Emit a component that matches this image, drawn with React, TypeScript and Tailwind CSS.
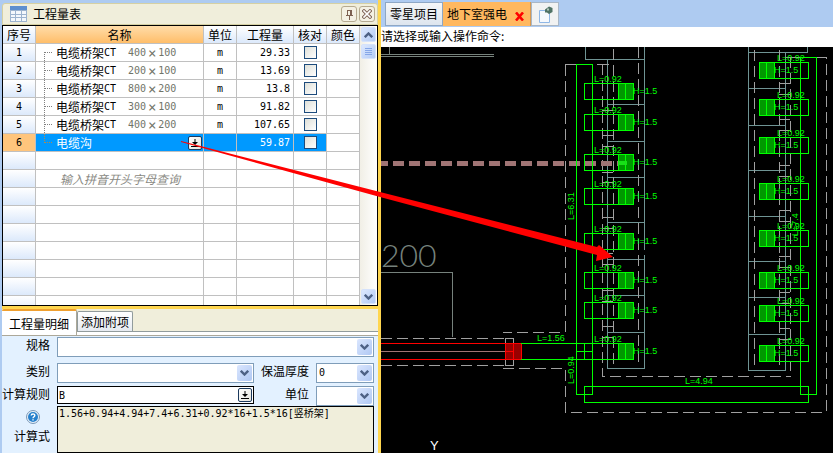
import { useState } from 'react';
import type { ReactNode } from 'react';

type Item = { name: string; size?: [string, string]; unit: string; qty: string };

const items: Item[] = [
  { name: '电缆桥架', size: ['400', '100'], unit: 'm', qty: '29.33' },
  { name: '电缆桥架', size: ['200', '100'], unit: 'm', qty: '13.69' },
  { name: '电缆桥架', size: ['800', '200'], unit: 'm', qty: '13.8' },
  { name: '电缆桥架', size: ['300', '100'], unit: 'm', qty: '91.82' },
  { name: '电缆桥架', size: ['400', '200'], unit: 'm', qty: '107.65' },
  { name: '电缆沟', unit: '', qty: '59.87' },
];

const EMPTY_ROWS = 9;

const cell = 'h-[18px] overflow-hidden border-r border-b border-[#c0c0c0] p-0';
const head = 'h-[18px] border-r border-b border-[#c0c0c0] bg-linear-to-b from-white to-[#dce9fb] p-0 font-normal';
const mono = 'font-[DejaVu_Sans_Mono,monospace] text-[10px]';

function Chevron({ up = false }: { up?: boolean }) {
  return (
    <svg viewBox="0 0 9 6" className="h-[6px] w-[9px]" fill="none" stroke="#4d6185" strokeWidth="2.4">
      <path d={up ? 'M0.8 5.2 4.5 1.5 8.2 5.2' : 'M0.8 0.8 4.5 4.5 8.2 0.8'} />
    </svg>
  );
}

function DropIcon() {
  return (
    <svg viewBox="0 0 8 8" className="h-2 w-2" fill="#000">
      <path d="M3.5 0h1v3H7L4 6 1 3h2.5zM0 7h8v1H0z" />
    </svg>
  );
}

function DropButton({ label }: { label: string }) {
  return (
    <button
      type="button"
      aria-label={label}
      className="flex h-[14px] w-[14px] shrink-0 items-center justify-center rounded-[2px] border border-[#1c3a5e] bg-linear-to-br from-white to-[#e4e4dc]"
    >
      <DropIcon />
    </button>
  );
}

function ScrollButton({ label, children }: { label: string; children: ReactNode }) {
  return (
    <button
      type="button"
      aria-label={label}
      className="flex h-[15px] w-[15px] items-center justify-center rounded-[2px] border border-[#d5e2fb] bg-linear-to-br from-[#dce8fe] to-[#b4cbf5]"
    >
      {children}
    </button>
  );
}

function Combo({ id, value = '' }: { id: string; value?: string }) {
  return (
    <div className="relative h-5 border border-[#7f9db9] bg-white">
      <select id={id} className={`${mono} block h-full w-full appearance-none bg-transparent px-[2px] outline-none`} defaultValue={value}>
        <option value={value}>{value}</option>
      </select>
      <span className="pointer-events-none absolute top-px right-px bottom-px flex w-[15px] items-center justify-center rounded-[2px] bg-linear-to-br from-[#dae6fe] to-[#b0c8f3]">
        <Chevron />
      </span>
    </div>
  );
}

function TreeBranch({ first, last }: { first: boolean; last: boolean }) {
  return (
    <svg viewBox="0 0 12 18" className="ml-2 h-[18px] w-3 shrink-0" stroke={last ? '#b08a50' : '#808080'} strokeDasharray="1 1" shapeRendering="crispEdges">
      <path d={`M0.5 ${first ? 8 : 0}V${last ? 9 : 18}M1 8.5H9`} fill="none" />
    </svg>
  );
}

function QuantityTable() {
  const [checked, setChecked] = useState<Set<number>>(new Set());
  const selected = 5;

  const toggle = (i: number) => {
    setChecked((prev) => {
      const next = new Set(prev);
      if (next.has(i)) {
        next.delete(i);
      } else {
        next.add(i);
      }
      return next;
    });
  };

  return (
    <div className="flex h-[281px] overflow-hidden border border-black bg-white">
      <table className="w-[357px] table-fixed border-separate border-spacing-0 self-start leading-4">
        <colgroup>
          <col className="w-[33px]" />
          <col className="w-[168px]" />
          <col className="w-[33px]" />
          <col className="w-[57px]" />
          <col className="w-[33px]" />
          <col className="w-[33px]" />
        </colgroup>
        <thead>
          <tr>
            <th className={head}>序号</th>
            <th className="h-[18px] border-r border-b border-[#c0c0c0] bg-linear-to-b from-[#ffdca8] to-[#ffbe69] p-0 font-normal">名称</th>
            <th className={head}>单位</th>
            <th className={head}>工程量</th>
            <th className={head}>核对</th>
            <th className={head}>颜色</th>
          </tr>
        </thead>
        <tbody>
          {items.map((item, i) => {
            const active = i === selected;
            const tone = active ? 'bg-[#0099ff] text-white' : 'bg-white';
            return (
              <tr key={i}>
                <td className={`${cell} ${mono} text-center ${active ? 'bg-[#ffc57c]' : 'bg-linear-to-b from-white to-[#dce9fb]'}`}>{i + 1}</td>
                <td className={`${cell} ${tone}`}>
                  <div className="flex h-[17px] items-center">
                    <TreeBranch first={i === 0} last={active} />
                    <span>{item.name}</span>
                    {item.size && (
                      <>
                        <span className={mono}>CT</span>
                        <span className={`${mono} ml-3 flex text-[#707468]`}>
                          {item.size[0]}
                          <span className="w-3 text-center text-[14px]">×</span>
                          {item.size[1]}
                        </span>
                      </>
                    )}
                    {active && (
                      <span className="mr-px ml-auto">
                        <DropButton label="展开名称" />
                      </span>
                    )}
                  </div>
                </td>
                <td className={`${cell} ${mono} text-center ${tone}`}>{item.unit}</td>
                <td className={`${cell} ${mono} pr-[3px] text-right ${tone}`}>{item.qty}</td>
                <td className={`${cell} ${tone}`}>
                  <input
                    type="checkbox"
                    aria-label={`核对 ${i + 1}`}
                    checked={checked.has(i)}
                    onChange={() => toggle(i)}
                    className="mx-auto block h-[13px] w-[13px] appearance-none border border-[#1d4b7c] bg-linear-to-br from-[#dedfd8] to-white checked:bg-[#21a121]"
                  />
                </td>
                <td className={cell}></td>
              </tr>
            );
          })}
          {Array.from({ length: EMPTY_ROWS }, (_, i) => (
            <tr key={i}>
              <td className={`${cell} bg-linear-to-b from-white to-[#dce9fb]`}></td>
              <td className={`${cell} text-[#8a8a84] italic`}>{i === 1 && <span className="ml-6">输入拼音开头字母查询</span>}</td>
              <td className={cell}></td>
              <td className={cell}></td>
              <td className={cell}></td>
              <td className={cell}></td>
            </tr>
          ))}
        </tbody>
      </table>
      <div className="flex flex-1 flex-col items-center gap-[2px] bg-linear-to-r from-[#f1efe6] to-white py-px">
        <ScrollButton label="向上滚动">
          <Chevron up />
        </ScrollButton>
        <ScrollButton label="滚动块">
          <span className="flex flex-col gap-px">
            <span className="h-px w-[7px] bg-[#86a7e8]" />
            <span className="h-px w-[7px] bg-[#86a7e8]" />
            <span className="h-px w-[7px] bg-[#86a7e8]" />
            <span className="h-px w-[7px] bg-[#86a7e8]" />
          </span>
        </ScrollButton>
        <div className="mt-auto">
          <ScrollButton label="向下滚动">
            <Chevron />
          </ScrollButton>
        </div>
      </div>
    </div>
  );
}

function DetailForm() {
  return (
    <form className="flex flex-1 flex-col bg-[#e3f1ff] pt-px pr-1">
      <div className="grid grid-cols-[48px_1fr] gap-x-[7px]">
        <label htmlFor="spec" className="text-right leading-4">规格</label>
        <Combo id="spec" />
      </div>
      <div className="mt-[6px] grid grid-cols-[48px_197px_1fr_58px] gap-x-[7px] gap-y-[3px]">
        <label htmlFor="kind" className="text-right leading-4">类别</label>
        <Combo id="kind" />
        <label htmlFor="thickness" className="text-right leading-4 whitespace-nowrap">保温厚度</label>
        <Combo id="thickness" value="0" />
        <label htmlFor="rule" className="text-right leading-4">计算规则</label>
        <div className="flex h-[18px] items-center border border-black bg-white pr-px">
          <input id="rule" defaultValue="B" className={`${mono} h-full min-w-0 flex-1 px-px outline-none`} />
          <DropButton label="选择计算规则" />
        </div>
        <label htmlFor="unit" className="text-right leading-4">单位</label>
        <Combo id="unit" />
      </div>
      <div className="grid flex-1 grid-cols-[48px_1fr] gap-x-[7px]">
        <div className="flex flex-col items-end gap-1 pt-1">
          <button type="button" aria-label="帮助" className="mr-[10px]">
            <svg viewBox="0 0 14 14" className="h-[14px] w-[14px]">
              <circle cx="7" cy="7" r="6.5" fill="#e8f1fa" stroke="#7a98b8" />
              <circle cx="7" cy="7" r="5" fill="#2680cc" />
              <path d="M5.2 5.6C5.2 3.4 8.8 3.4 8.8 5.5 8.8 6.8 7 6.8 7 8.2M7 9.2V10.4" fill="none" stroke="#fff" strokeWidth="1.4" />
            </svg>
          </button>
          <label htmlFor="formula" className="leading-4">计算式</label>
        </div>
        <textarea
          id="formula"
          defaultValue="1.56+0.94+4.94+7.4+6.31+0.92*16+1.5*16[竖桥架]"
          className="block h-full w-full resize-none border border-black bg-[#f0eedb] px-px font-[DejaVu_Sans_Mono,Noto_Sans_CJK_SC,monospace] text-[10px] leading-[14px] outline-none"
        />
      </div>
    </form>
  );
}

// Tray boxes on either side: top edge of each one
const leftBoxes = [83, 114, 154, 188, 233, 272, 302, 343];
const rightBoxes = [62, 99, 137, 183, 230, 272, 305, 345];
const leftPanels = [59, 104, 141, 177, 222, 259, 295, 332, 368];
const rightPanels = [52, 88, 125, 170, 216, 261, 297, 334, 370];
const leftTicks = [110, 135, 146, 172, 182, 217, 228, 253, 264, 290, 301, 326, 337];
const rightTicks = [83, 94, 119, 130, 165, 176, 210, 221, 256, 267, 292, 303, 328, 339];

function Drawing() {
  return (
    <svg viewBox="381 47 452 406" className="block h-[406px] w-[452px]" fill="none" shapeRendering="crispEdges">
      {/* building outline */}
      <g stroke="#6f9494">
        <path d="M389 47V54M381 54H494M381 56H494" stroke="#76827c" />
        <path d="M381 272H452V337" stroke="#76827c" />
        <path d="M585 47V59M607 59V368M644 47V250M644 255V368M585 59H607" />
        {leftPanels.map((y) => (
          <path key={y} d={`M607 ${y}H645`} />
        ))}
        <path d="M748 47V370M785 52V370M807 47V52H785" />
        {rightPanels.map((y) => (
          <path key={y} d={`M748 ${y}H786`} />
        ))}
      </g>

      {/* trench edges */}
      <g stroke="#a0a0a0">
        <g strokeDasharray="11 5">
          <path d="M565 65V332H503M503 368H565V412H826V57" />
          <path d="M602 64V376H791M613 49V364M638 47V364" />
          <path d="M754 50V365M779 50V365M790 57V371" />
          <path d="M381 338H505M381 365H505" />
        </g>
        <path d="M565 64H576M597 64H609M785 57H800M816 57H826M505 338V365H513V338Z" />
        {leftTicks.map((y) => (
          <path key={y} d={`M602 ${y}H613`} />
        ))}
        {rightTicks.map((y) => (
          <path key={y} d={`M779 ${y}H790`} />
        ))}
      </g>

      {/* conduit run */}
      <path d="M377 163H621" stroke="#a07474" strokeWidth="5" strokeDasharray="11 5" />

      {/* riser */}
      <rect x="505" y="343" width="16" height="16" fill="#990000" stroke="#ff0000" />
      <path d="M381 343H521M381 359H521M513 343V359M505 351H513" stroke="#ff0000" />
      <path d="M381 351H505" stroke="#a07474" />

      {/* cable trays */}
      <g stroke="#00ff00">
        <rect x="576" y="64" width="16" height="330" />
        <rect x="584" y="386" width="224" height="16" />
        <rect x="800" y="57" width="16" height="337" />
        <path d="M521 343H633M521 359H633M576 351H592M584 343V359" />
        {leftBoxes.map((y) => (
          <g key={y}>
            <rect x="584" y={y} width="49" height="16" />
            <rect x="618" y={y} width="15" height="16" fill="#009900" />
            <path d={`M625 ${y}V${y + 16}`} />
          </g>
        ))}
        {rightBoxes.map((y) => (
          <g key={y}>
            <rect x="759" y={y} width="49" height="16" />
            <rect x="759" y={y} width="15" height="16" fill="#009900" />
            <path d={`M766 ${y}V${y + 16}`} />
          </g>
        ))}
      </g>
      <rect x="618" y="161" width="9" height="4" fill="#18e018" />

      {/* lengths */}
      <g fill="#00ff00" className="font-[Liberation_Sans,sans-serif] text-[9px]">
        {leftBoxes.map((y) => (
          <g key={y}>
            <text x="594" y={y - 1}>L=0.92</text>
            <text x="633" y={y + 11}>H=1.5</text>
          </g>
        ))}
        {rightBoxes.map((y) => (
          <g key={y}>
            <text x="777" y={y - 1}>L=0.92</text>
            <text x="774" y={y + 11}>H=1.5</text>
          </g>
        ))}
        <text x="537" y="341">L=1.56</text>
        <text x="685" y="384">L=4.94</text>
        <text transform="translate(574 220) rotate(-90)">L=6.31</text>
        <text transform="translate(574 384) rotate(-90)">L=0.94</text>
        <text transform="translate(798 236) rotate(-90)">L=7.4</text>
      </g>
      <text x="381" y="267" fill="#76827c" className="font-[Lato,sans-serif] text-[32px] font-light">200</text>
      <text x="430" y="450" fill="#fff" className="font-[Liberation_Sans,sans-serif] text-[13px]">Y</text>
    </svg>
  );
}

export default function App() {
  return (
    <div className="relative flex min-h-screen overflow-hidden bg-[#aecbf1] font-[Noto_Sans_CJK_SC,sans-serif] text-xs text-black">
      {/* Quantity panel */}
      <aside className="flex w-[381px] shrink-0 flex-col border-r-3 border-[#ffd64f] pl-[2px]">
        <header className="mt-[3px] flex h-[22px] items-center rounded-t-[3px] border border-[#d5d0a4] bg-[#f0eedb] pr-[2px] pl-[7px]">
          <svg viewBox="0 0 17 16" className="h-4 w-[17px]" shapeRendering="crispEdges">
            <path d="M0 0H17V16H0Z" fill="#9db4cf" />
            <path d="M0 0H17V4H0Z" fill="#5d8fcf" />
            <path d="M1 5H5V8H1ZM6 5H11V8H6ZM12 5H16V8H12ZM1 9H5V11H1ZM6 9H11V11H6ZM12 9H16V11H12ZM1 12H5V15H1ZM6 12H11V15H6ZM12 12H16V15H12Z" fill="#f4f8fc" />
          </svg>
          <h1 className="ml-[6px] leading-4">工程量表</h1>
          <div className="ml-auto flex gap-[2px]">
            <button type="button" aria-label="固定" className="flex h-4 w-4 items-center justify-center rounded-[3px] border border-[#b5aa90] bg-[#f4f1e4]">
              <svg viewBox="0 0 9 11" className="h-[11px] w-[9px]" fill="none" stroke="#7d6152" shapeRendering="crispEdges">
                <path d="M2.5 6V1.5H6.5V6M5.5 1V6M1 6.5H8M4.5 7V11" />
              </svg>
            </button>
            <button type="button" aria-label="关闭" className="flex h-4 w-4 items-center justify-center rounded-[3px] border border-[#b5aa90] bg-[#f4f1e4]">
              <svg viewBox="0 0 10 10" className="h-[10px] w-[10px]" strokeLinecap="square">
                <path d="M2 2 8 8M8 2 2 8" stroke="#7d6152" strokeWidth="3.4" />
                <path d="M2 2 8 8M8 2 2 8" stroke="#fff" strokeWidth="1.6" />
              </svg>
            </button>
          </div>
        </header>

        <QuantityTable />

        {/* Detail tabs */}
        <div className="flex h-[30px] items-start border-t-3 border-b border-t-[#ffd64f] border-b-[#aca899] bg-[#f0eedb]">
          <button type="button" className="h-full rounded-t-[2px] border-t-2 border-r border-t-[#f0a030] border-r-[#aca899] bg-white px-[7px] leading-[17px] whitespace-nowrap">工程量明细</button>
          <div className="flex h-full flex-1 flex-col">
            <div className="flex flex-1 items-end border-b border-[#919b9c]">
              <button type="button" className="h-5 rounded-t-[2px] border border-b-0 border-[#919b9c] bg-linear-to-b from-white to-[#e6eaf0] px-[3px] leading-4">添加附项</button>
            </div>
            <div className="h-[3px] bg-white" />
          </div>
        </div>

        <DetailForm />
      </aside>

      {/* Drawing area */}
      <main className="flex min-w-0 flex-1 flex-col">
        <nav className="flex h-[27px] items-start pt-[2px] pl-1">
          <button type="button" className="h-6 border border-[#8ea7c5] bg-linear-to-b from-[#f4f6f8] to-[#dde5ee] px-1 leading-5">零星项目</button>
          <button type="button" className="flex h-6 items-center border-r border-[#d79a52] bg-[#ffb85f] pr-[6px] pl-1 leading-5 whitespace-nowrap">
            地下室强电
            <svg viewBox="0 0 9 9" className="mt-1 ml-2 h-[9px] w-[9px]" stroke="#ff0000" strokeWidth="2.6">
              <path d="M1 0.5 8 8.5M8 0.5 1 8.5" />
            </svg>
          </button>
          <button type="button" aria-label="新建" className="flex h-6 w-7 items-center justify-center border border-[#a9b7c6] bg-[#f1f2f2]">
            <svg viewBox="0 0 15 17" className="h-[17px] w-[15px]" fill="none">
              <path d="M1.5 4.5H11.5V16.5H1.5Z" fill="#f6f9fd" stroke="#8fb7e6" />
              <path d="M7 3.5 11 0.5 14.5 2V6L11 8 9 6.5H7Z" fill="#4f7265" />
              <path d="M9 2.5H11V4.5H9Z" fill="#b5c9be" />
            </svg>
          </button>
        </nav>
        <p className="h-5 bg-white leading-[17px]">请选择或输入操作命令:</p>
        <div className="flex-1 overflow-hidden bg-black">
          <Drawing />
        </div>
      </main>

      {/* Pointer from the selected row to its trench */}
      <svg viewBox="0 0 833 453" className="pointer-events-none absolute top-0 left-0 h-[453px] w-[833px]" fill="#ff0000">
        <path d="M181 141 380 192 597 247 599 245 613 257 596 261 597 255 380 197 181 142Z" />
      </svg>
    </div>
  );
}
